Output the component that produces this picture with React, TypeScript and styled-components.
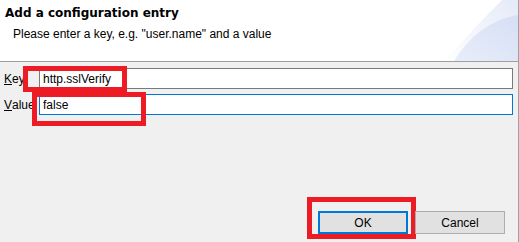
import React from "react";
import styled, { createGlobalStyle } from "styled-components";

const GlobalStyle = createGlobalStyle`
  html, body {
    margin: 0;
    padding: 0;
    background: #f0f0f0;
  }
  body {
    font-family: "Liberation Sans", Arial, sans-serif;
    font-size: 12px;
    color: #000;
  }
`;

const Dialog = styled.div`
  width: 519px;
  height: 242px;
  box-sizing: border-box;
  border-right: 1px solid #a0a0a0;
  background: #f0f0f0;
  display: flex;
  flex-direction: column;
`;

const Header = styled.header`
  height: 62px;
  box-sizing: border-box;
  background: #ffffff;
  border-bottom: 1px solid #a0a0a0;
  display: flex;
  flex: none;
`;

const HeaderText = styled.div`
  flex: 1;
  padding: 6px 0 0 5px;
`;

const Title = styled.div`
  font-family: "DejaVu Sans", Verdana, sans-serif;
  font-weight: bold;
  font-size: 12px;
  line-height: 14px;
  white-space: nowrap;
`;

const Subtitle = styled.div`
  margin-top: 7px;
  padding-left: 8px;
  line-height: 14px;
  white-space: nowrap;
`;

const Banner = styled.svg`
  flex: none;
  display: block;
`;

const Form = styled.div`
  display: grid;
  grid-template-columns: 35px 1fr;
  row-gap: 5px;
  padding: 6px 5px 0 4px;
`;

const Label = styled.label`
  display: flex;
  align-items: center;
  height: 21px;
  white-space: nowrap;
  line-height: 14px;
`;

const Mnemonic = styled.span`
  text-decoration: underline;
`;

const Field = styled.div`
  position: relative;
`;

const Input = styled.input<{ $focused?: boolean }>`
  display: block;
  width: 100%;
  height: 21px;
  box-sizing: border-box;
  margin: 0;
  padding: 0 3px;
  border: 1px solid ${(p) => (p.$focused ? "#0078d7" : "#7a7a7a")};
  background: #ffffff;
  font-family: "Liberation Sans", Arial, sans-serif;
  font-size: 12px;
  color: #000;
  outline: none;
`;

const Highlight = styled.span<{ $left: number; $top: number; $w: number; $h: number }>`
  position: absolute;
  left: ${(p) => p.$left}px;
  top: ${(p) => p.$top}px;
  width: ${(p) => p.$w}px;
  height: ${(p) => p.$h}px;
  box-sizing: border-box;
  border: 5px solid #ed1c24;
  pointer-events: none;
`;

const ButtonBar = styled.div`
  margin-top: auto;
  display: flex;
  justify-content: flex-end;
  gap: 7px;
  padding: 0 13px 8px 0;
`;

const ButtonWrap = styled.div`
  position: relative;
`;

const Button = styled.button<{ $default?: boolean }>`
  display: block;
  width: 90px;
  height: 23px;
  box-sizing: border-box;
  margin: 0;
  padding: 0;
  background: #e1e1e1;
  border: ${(p) => (p.$default ? "2px solid #0078d7" : "1px solid #adadad")};
  font-family: "Liberation Sans", Arial, sans-serif;
  font-size: 12px;
  color: #000;
`;

export default function App() {
  return (
    <>
      <GlobalStyle />
      <Dialog>
        <Header>
          <HeaderText>
            <Title>Add a configuration entry</Title>
            <Subtitle>Please enter a key, e.g. "user.name" and a value</Subtitle>
          </HeaderText>
          <Banner width="80" height="61" viewBox="0 0 80 61">
            <defs>
              <linearGradient id="outerG" x1="0" y1="1" x2="1" y2="0">
                <stop offset="0" stopColor="#ffffff" />
                <stop offset="1" stopColor="#e4eaf8" />
              </linearGradient>
              <linearGradient id="innerG" x1="0" y1="1" x2="1" y2="0">
                <stop offset="0" stopColor="#e8edf9" />
                <stop offset="1" stopColor="#d6dff4" />
              </linearGradient>
            </defs>
            <path d="M6 61 Q38 26 64 0 L80 0 L80 61 Z" fill="url(#outerG)" />
            <path d="M16 61 Q40 22 80 15 L80 61 Z" fill="url(#innerG)" />
          </Banner>
        </Header>
        <Form>
          <Label>
            <Mnemonic>K</Mnemonic>ey
          </Label>
          <Field>
            <Input defaultValue="http.sslVerify" readOnly />
            <Highlight $left={-16} $top={-2} $w={104} $h={26} />
          </Field>
          <Label>
            <Mnemonic>V</Mnemonic>alue
          </Label>
          <Field>
            <Input $focused defaultValue="false" readOnly />
            <Highlight $left={-7} $top={-2} $w={114} $h={34} />
          </Field>
        </Form>
        <ButtonBar>
          <ButtonWrap>
            <Button $default>OK</Button>
            <Highlight $left={-11} $top={-14} $w={109} $h={42} />
          </ButtonWrap>
          <ButtonWrap>
            <Button>Cancel</Button>
          </ButtonWrap>
        </ButtonBar>
      </Dialog>
    </>
  );
}
